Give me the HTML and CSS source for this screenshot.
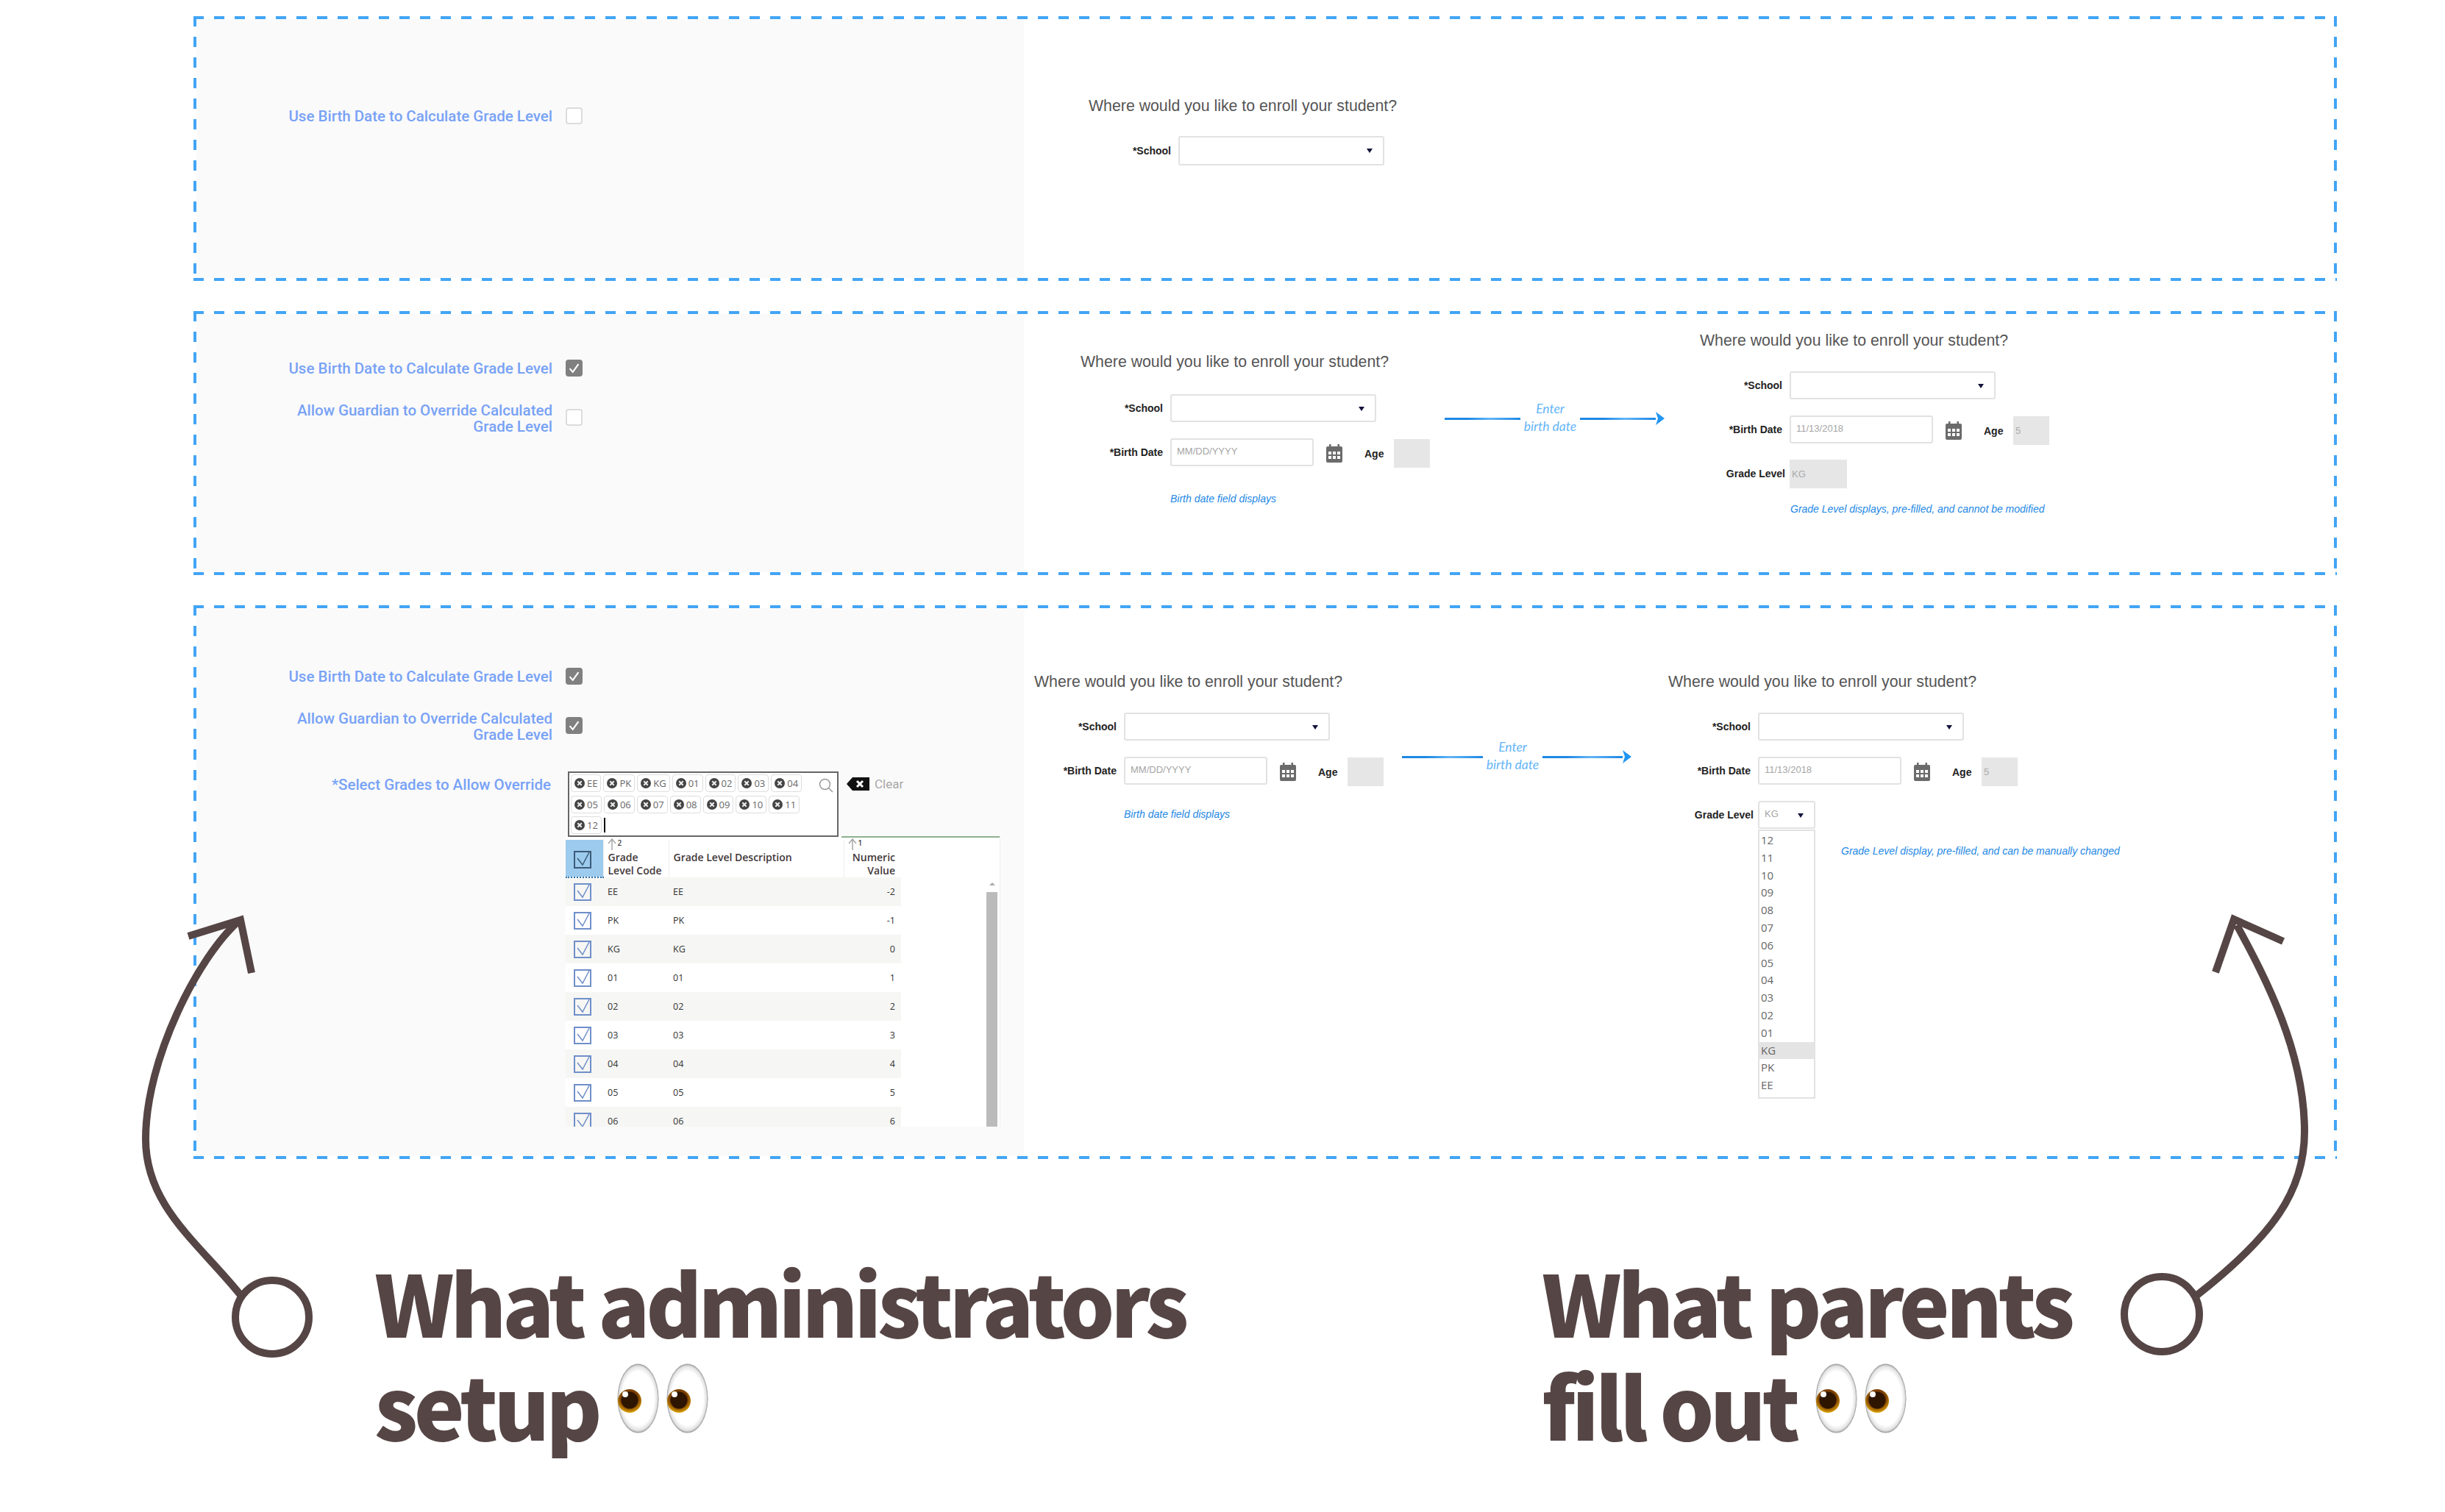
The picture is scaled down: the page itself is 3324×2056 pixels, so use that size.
FILE: index.html
```html
<!DOCTYPE html>
<html lang="en">
<head>
  <meta charset="UTF-8">
  <title>Grade Level Setup</title>
  <link rel="stylesheet" href="styles.css">
</head>
<body>

<svg class="sprite" aria-hidden="true">
  <defs>
    <radialGradient id="eyeWhite" cx="50%" cy="50%" r="50%">
      <stop offset="78%" stop-color="#ffffff"/>
      <stop offset="93%" stop-color="#e2e2e2"/>
      <stop offset="100%" stop-color="#979797"/>
    </radialGradient>
    <radialGradient id="eyeIris" cx="50%" cy="40%" r="60%">
      <stop offset="62%" stop-color="#7a3e00"/>
      <stop offset="100%" stop-color="#e0a400"/>
    </radialGradient>
  </defs>
  <symbol id="calendar" viewBox="0 0 22 25">
    <path fill="#6b6b6b" d="M4 0h2.5v3H15.500V0H18v3h2a2 2 0 0 1 2 2v18a2 2 0 0 1-2 2H2a2 2 0 0 1-2-2V5a2 2 0 0 1 2-2h2z"/>
    <path fill="#fff" d="M3 10h4v4H3zM9 10h4v4H9zM15 10h4v4h-4zM3 16h4v4H3zM9 16h4v4H9zM15 16h4v4h-4z"/>
  </symbol>
  <symbol id="chipX" viewBox="0 0 14 14">
    <circle cx="7" cy="7" r="7" fill="#444"/>
    <path d="M4.300 4.300l5.400 5.400M9.700 4.300l-5.400 5.400" stroke="#eee" stroke-width="2"/>
  </symbol>
  <symbol id="tick" viewBox="0 0 24 24">
    <rect x="1" y="1" width="22" height="22" fill="none" stroke="currentColor" stroke-width="2"/>
    <path d="M5 10l7 9 9-17" fill="none" stroke="currentColor" stroke-width="1.500"/>
  </symbol>
  <symbol id="sortUp" viewBox="0 0 12 16">
    <path d="M6 16V1M1 7l5-6 5 6" fill="none" stroke="#a8a8a8" stroke-width="1.500"/>
  </symbol>
  <symbol id="eyes" viewBox="0 0 124 95">
    <ellipse cx="28.500" cy="47.500" rx="28" ry="47" fill="url(#eyeWhite)"/>
    <circle cx="17" cy="51" r="16" fill="url(#eyeIris)"/>
    <circle cx="17" cy="50" r="11.500" fill="#2e1500"/>
    <circle cx="11" cy="42" r="4" fill="#fff"/>
    <ellipse cx="95.500" cy="47.500" rx="28" ry="47" fill="url(#eyeWhite)"/>
    <circle cx="84" cy="51" r="16" fill="url(#eyeIris)"/>
    <circle cx="84" cy="50" r="11.500" fill="#2e1500"/>
    <circle cx="78" cy="42" r="4" fill="#fff"/>
  </symbol>
</svg>

<main class="boards">

  <!-- first board: nothing checked -->
  <section class="board board-1">
    <div class="admin admin-1">
      <div class="setting">
        <label class="setting-label">Use Birth Date to Calculate Grade Level</label>
        <span class="check"></span>
      </div>
    </div>
    <div class="parent">
      <div class="form form-solo">
        <h3>Where would you like to enroll your student?</h3>
        <div class="row">
          <span class="field-label">*School</span>
          <span class="select"></span>
        </div>
      </div>
    </div>
  </section>

  <!-- second board: birth date on -->
  <section class="board board-2">
    <div class="admin admin-2">
      <div class="setting">
        <label class="setting-label">Use Birth Date to Calculate Grade Level</label>
        <span class="check check-on"><svg viewBox="0 0 16 16"><path d="M3 8.500l3.500 4L13 3.500" fill="none" stroke="#fff" stroke-width="1.800"/></svg></span>
      </div>
      <div class="setting">
        <label class="setting-label">Allow Guardian to Override Calculated<br>Grade Level</label>
        <span class="check check-up"></span>
      </div>
    </div>
    <div class="parent">
      <div class="form form-2a">
        <h3>Where would you like to enroll your student?</h3>
        <div class="row">
          <span class="field-label">*School</span>
          <span class="select"></span>
        </div>
        <div class="row">
          <span class="field-label">*Birth Date</span>
          <span class="date placeholder">MM/DD/YYYY</span>
          <svg class="cal"><use href="#calendar"/></svg>
          <span class="age-label">Age</span>
          <span class="age"></span>
        </div>
        <p class="note note-2a">Birth date field displays</p>
      </div>
      <div class="link link-2">
        <span class="line line-a"></span>
        <span class="link-text">Enter<br>birth date</span>
        <span class="line line-b"></span>
        <svg class="head" viewBox="0 0 14 18"><path d="M2 0l12 9-12 9 3-9z" fill="#2196f3"/></svg>
      </div>
      <div class="form form-2b">
        <h3>Where would you like to enroll your student?</h3>
        <div class="row">
          <span class="field-label">*School</span>
          <span class="select"></span>
        </div>
        <div class="row">
          <span class="field-label">*Birth Date</span>
          <span class="date placeholder">11/13/2018</span>
          <svg class="cal"><use href="#calendar"/></svg>
          <span class="age-label">Age</span>
          <span class="age">5</span>
        </div>
        <div class="row">
          <span class="field-label label-grade">Grade Level</span>
          <span class="age age-wide">KG</span>
        </div>
        <p class="note note-2b">Grade Level displays, pre-filled, and cannot be modified</p>
      </div>
    </div>
  </section>

  <!-- third board: override allowed -->
  <section class="board board-3">
    <div class="admin admin-3">
      <div class="setting">
        <label class="setting-label">Use Birth Date to Calculate Grade Level</label>
        <span class="check check-on"><svg viewBox="0 0 16 16"><path d="M3 8.500l3.500 4L13 3.500" fill="none" stroke="#fff" stroke-width="1.800"/></svg></span>
      </div>
      <div class="setting">
        <label class="setting-label">Allow Guardian to Override Calculated<br>Grade Level</label>
        <span class="check check-on check-up"><svg viewBox="0 0 16 16"><path d="M3 8.500l3.500 4L13 3.500" fill="none" stroke="#fff" stroke-width="1.800"/></svg></span>
      </div>
      <div class="setting setting-grades">
        <label class="setting-label">*Select Grades to Allow Override</label>
        <div class="picker">
          <span class="chip"><svg><use href="#chipX"/></svg>EE</span>
          <span class="chip"><svg><use href="#chipX"/></svg>PK</span>
          <span class="chip"><svg><use href="#chipX"/></svg>KG</span>
          <span class="chip"><svg><use href="#chipX"/></svg>01</span>
          <span class="chip"><svg><use href="#chipX"/></svg>02</span>
          <span class="chip"><svg><use href="#chipX"/></svg>03</span>
          <span class="chip"><svg><use href="#chipX"/></svg>04</span>
          <span class="chip"><svg><use href="#chipX"/></svg>05</span>
          <span class="chip"><svg><use href="#chipX"/></svg>06</span>
          <span class="chip"><svg><use href="#chipX"/></svg>07</span>
          <span class="chip"><svg><use href="#chipX"/></svg>08</span>
          <span class="chip"><svg><use href="#chipX"/></svg>09</span>
          <span class="chip"><svg><use href="#chipX"/></svg>10</span>
          <span class="chip"><svg><use href="#chipX"/></svg>11</span>
          <span class="chip"><svg><use href="#chipX"/></svg>12</span>
          <span class="caret"></span>
          <svg class="search" viewBox="0 0 20 20"><circle cx="8.500" cy="8.500" r="7" fill="none" stroke="#999" stroke-width="1.500"/><path d="M13.500 13.500L19 19" stroke="#999" stroke-width="1.500"/></svg>
        </div>
        <div class="clear">
          <svg viewBox="0 0 31 18"><path d="M0 9l8-9h23v18H8z" fill="#111"/><path d="M14 5l8 8M22 5l-8 8" stroke="#fff" stroke-width="3"/></svg>
          <span>Clear</span>
        </div>
      </div>
      <div class="grid-wrap">
        <div class="grid-rule"></div>
        <div class="grid-body">
          <table class="grid">
            <colgroup><col class="c1"><col class="c2"><col class="c3"><col class="c4"></colgroup>
            <thead>
              <tr>
                <th class="th-check"><svg class="box box-head"><use href="#tick"/></svg></th>
                <th><span class="sort"><svg><use href="#sortUp"/></svg>2</span>Grade<br>Level Code</th>
                <th>Grade Level Description</th>
                <th class="num"><span class="sort"><svg><use href="#sortUp"/></svg>1</span>Numeric<br>Value</th>
              </tr>
            </thead>
            <tbody>
              <tr><td class="td-check"><svg class="box"><use href="#tick"/></svg></td><td>EE</td><td>EE</td><td class="num">-2</td></tr>
              <tr><td class="td-check"><svg class="box"><use href="#tick"/></svg></td><td>PK</td><td>PK</td><td class="num">-1</td></tr>
              <tr><td class="td-check"><svg class="box"><use href="#tick"/></svg></td><td>KG</td><td>KG</td><td class="num">0</td></tr>
              <tr><td class="td-check"><svg class="box"><use href="#tick"/></svg></td><td>01</td><td>01</td><td class="num">1</td></tr>
              <tr><td class="td-check"><svg class="box"><use href="#tick"/></svg></td><td>02</td><td>02</td><td class="num">2</td></tr>
              <tr><td class="td-check"><svg class="box"><use href="#tick"/></svg></td><td>03</td><td>03</td><td class="num">3</td></tr>
              <tr><td class="td-check"><svg class="box"><use href="#tick"/></svg></td><td>04</td><td>04</td><td class="num">4</td></tr>
              <tr><td class="td-check"><svg class="box"><use href="#tick"/></svg></td><td>05</td><td>05</td><td class="num">5</td></tr>
              <tr><td class="td-check"><svg class="box"><use href="#tick"/></svg></td><td>06</td><td>06</td><td class="num">6</td></tr>
            </tbody>
          </table>
          <div class="scroll">
            <span class="scroll-up"></span>
            <span class="scroll-thumb"></span>
          </div>
        </div>
      </div>
    </div>
    <div class="parent">
      <div class="form form-3a">
        <h3>Where would you like to enroll your student?</h3>
        <div class="row">
          <span class="field-label">*School</span>
          <span class="select"></span>
        </div>
        <div class="row">
          <span class="field-label">*Birth Date</span>
          <span class="date placeholder">MM/DD/YYYY</span>
          <svg class="cal"><use href="#calendar"/></svg>
          <span class="age-label">Age</span>
          <span class="age"></span>
        </div>
        <p class="note note-3a">Birth date field displays</p>
      </div>
      <div class="link link-3">
        <span class="line line-a"></span>
        <span class="link-text">Enter<br>birth date</span>
        <span class="line line-b"></span>
        <svg class="head" viewBox="0 0 14 18"><path d="M2 0l12 9-12 9 3-9z" fill="#2196f3"/></svg>
      </div>
      <div class="form form-3b">
        <h3>Where would you like to enroll your student?</h3>
        <div class="row">
          <span class="field-label">*School</span>
          <span class="select"></span>
        </div>
        <div class="row">
          <span class="field-label">*Birth Date</span>
          <span class="date placeholder">11/13/2018</span>
          <svg class="cal"><use href="#calendar"/></svg>
          <span class="age-label">Age</span>
          <span class="age">5</span>
        </div>
        <div class="row">
          <span class="field-label label-grade">Grade Level</span>
          <div class="dropdown">
            <span class="select select-small placeholder">KG</span>
            <ul class="list">
              <li>12</li><li>11</li><li>10</li><li>09</li><li>08</li><li>07</li><li>06</li><li>05</li>
              <li>04</li><li>03</li><li>02</li><li>01</li><li class="picked">KG</li><li>PK</li><li>EE</li>
            </ul>
          </div>
        </div>
        <p class="note note-3b">Grade Level display, pre-filled, and can be manually changed</p>
      </div>
    </div>
  </section>
</main>

<footer class="captions">
  <h2 class="caption caption-admin">What administrators<br>setup<svg class="eyes"><use href="#eyes"/></svg></h2>
  <h2 class="caption caption-parent">What parents<br>fill out<svg class="eyes"><use href="#eyes"/></svg></h2>
</footer>

<svg class="arrows" width="3324" height="2056" aria-hidden="true">
  <g fill="none" stroke="#564545" stroke-width="10">
    <circle cx="370" cy="1791" r="50"/>
    <path d="M327 1761C270 1690 198 1640 198 1549C198 1440 270 1300 325 1252"/>
    <path d="M256 1273L327 1251L342 1323"/>
    <circle cx="2939" cy="1787" r="51"/>
    <path d="M2987 1761C3090 1680 3133 1620 3133 1539C3133 1430 3080 1330 3041 1258"/>
    <path d="M3012 1322L3037 1250L3104 1280"/>
  </g>
</svg>

</body>
</html>
```

FILE: styles.css
```css
* {
  box-sizing: border-box;
}

body {
  position: relative;
  width: 3324px;
  height: 2056px;
  margin: 0;
  overflow: hidden;
  background-color: #fff;
  font-family: 'Liberation Sans', Arial, sans-serif;
}

.sprite {
  position: absolute;
  width: 0;
  height: 0;
}

.arrows {
  position: absolute;
  top: 0;
  left: 0;
  pointer-events: none;
}

.boards {
  display: flex;
  flex-direction: column;
  gap: 41px;
  width: 2914px;
  margin-left: 263px;
  padding-top: 22px;
}

.board {
  display: flex;
  padding: 4px;
  background:
    linear-gradient(90deg, #42a5f5 50%, transparent 50%) 0 0 / 28px 4px repeat-x,
    linear-gradient(90deg, #42a5f5 50%, transparent 50%) 0 100% / 28px 4px repeat-x,
    linear-gradient(#42a5f5 50%, transparent 50%) 0 0 / 4px 28px repeat-y,
    linear-gradient(#42a5f5 50%, transparent 50%) 100% 0 / 4px 28px repeat-y;
}

.board-1 {
  height: 360px;
}

.board-2 {
  height: 359px;
}

.board-3 {
  height: 753px;
}

/* left side */
.admin {
  flex: none;
  width: 1125px;
  background-color: #fafafa;
}

.admin-1 {
  padding-top: 120px;
}

.admin-2 {
  padding-top: 62px;
}

.admin-3 {
  padding-top: 81px;
}

.setting {
  display: flex;
  align-items: center;
  margin-bottom: 35px;
}

.setting-label {
  flex: none;
  width: 484px;
  margin-right: 18px;
  color: #78a2f6;
  font-family: Roboto, sans-serif;
  font-size: 20.500px;
  font-weight: 500;
  line-height: 22px;
  text-align: right;
}

.check {
  display: block;
  width: 23px;
  height: 23px;
  border: 2px solid #dcdcdc;
  border-radius: 4px;
  background-color: #fff;
}

.check svg {
  display: block;
}

.check-on {
  border-color: #808080;
  background-color: #808080;
}

.check-up {
  margin-top: -3px;
}

.setting-grades {
  align-items: flex-start;
  margin-top: 39px;
  margin-bottom: 0;
}

.setting-grades .setting-label {
  width: 482px;
  margin-top: 7px;
  margin-right: 23px;
}

.picker {
  position: relative;
  display: flex;
  flex: none;
  flex-wrap: wrap;
  align-content: flex-start;
  gap: 4.500px 3px;
  width: 368px;
  height: 89px;
  padding: 2px 30px 2px 2px;
  border: 2px solid #666;
  background-color: #fff;
}

.chip {
  display: flex;
  align-items: center;
  gap: 3px;
  height: 24px;
  padding: 0 4px;
  border: 1px solid #ddd;
  border-radius: 4px;
  color: #666;
  font-family: 'Open Sans', sans-serif;
  font-size: 13px;
}

.chip svg {
  width: 14px;
  height: 14px;
}

.caret {
  width: 2px;
  height: 20px;
  margin-top: 2px;
  background-color: #111;
}

.search {
  position: absolute;
  top: 7px;
  right: 5px;
  width: 20px;
  height: 20px;
}

.clear {
  display: flex;
  align-items: center;
  gap: 7px;
  margin-top: 7px;
  margin-left: 11px;
  color: #a8a8a8;
  font-family: Roboto, sans-serif;
  font-size: 17px;
}

.clear svg {
  width: 31px;
  height: 18px;
}

.grid-wrap {
  width: 591px;
  height: 395px;
  margin-top: -1px;
  margin-left: 502px;
  overflow: hidden;
  border-right: 1px solid #eee;
  background-color: #fff;
}

.grid-rule {
  height: 2px;
  margin-bottom: 3px;
  margin-left: 375px;
  background-color: #8db08d;
}

.grid-body {
  display: flex;
  align-items: flex-start;
}

.grid {
  flex: none;
  width: 456px;
  border-collapse: collapse;
  table-layout: fixed;
  color: #333;
  font-family: 'Open Sans', sans-serif;
  font-size: 12.500px;
}

.c1 { width: 51px; }
.c2 { width: 89px; }
.c3 { width: 238px; }
.c4 { width: 78px; }

.grid th {
  position: relative;
  height: 51px;
  padding: 15px 6px 0;
  border-left: 1px solid #eee;
  color: #43383a;
  font-size: 14px;
  font-weight: 600;
  line-height: 18px;
  text-align: left;
  vertical-align: top;
}

.grid .th-check {
  padding: 15px 0 0 11px;
  border-left: 0;
  border-bottom: 2px dotted #2f6fa8;
  background-color: #9ccbee;
}

.grid td {
  height: 39px;
  padding: 0 6px;
  vertical-align: middle;
}

.grid .td-check {
  padding: 0 0 0 11px;
}

.grid .num {
  padding-right: 8px;
  text-align: right;
}

.grid tbody tr:nth-child(odd) {
  background-color: #f6f6f4;
}

.sort {
  position: absolute;
  top: -2px;
  left: 5px;
  display: flex;
  align-items: flex-start;
  gap: 2px;
  color: #444;
  font-size: 10px;
  line-height: 12px;
}

.sort svg {
  width: 12px;
  height: 16px;
}

.box {
  display: block;
  width: 24px;
  height: 24px;
  color: #6f8fc9;
}

.box-head {
  color: #3d5a78;
}

.scroll {
  display: flex;
  flex-direction: column;
  align-items: center;
  width: 15px;
  height: 400px;
  margin-top: 51px;
  margin-left: 116px;
}

.scroll-up {
  width: 0;
  height: 0;
  margin: 7px 0 9px;
  border-right: 4px solid transparent;
  border-bottom: 4px solid #aaa;
  border-left: 4px solid transparent;
}

.scroll-thumb {
  width: 15px;
  flex: 1;
  background-color: #bbb;
}

/* right side */
.parent {
  display: flex;
  flex: 1;
  align-items: flex-start;
}

.form {
  flex: none;
}

.form h3 {
  margin: 0 0 30px;
  color: #555;
  font-size: 21.300px;
  font-weight: 400;
  line-height: 24px;
  white-space: nowrap;
}

.form-solo {
  margin-top: 106px;
  margin-left: 88px;
}

.form-solo .select {
  height: 40px;
}

.form-2a {
  width: 495px;
  margin-top: 53px;
  margin-left: 77px;
}

.form-2a h3 {
  margin-bottom: 32px;
}

.form-2b {
  margin-top: 24px;
  margin-left: 48px;
}

.form-3a {
  width: 500px;
  margin-top: 88px;
  margin-left: 14px;
}

.form-3b {
  margin-top: 88px;
  margin-left: 50px;
}

.row {
  display: flex;
  align-items: center;
  height: 38px;
  margin-bottom: 22px;
}

.field-label {
  flex: none;
  width: 112px;
  margin-right: 10px;
  color: #222;
  font-size: 14px;
  font-weight: 700;
  text-align: right;
  white-space: nowrap;
}

.label-grade {
  margin-right: 6px;
  margin-left: 4px;
}

.select,
.date {
  display: flex;
  align-items: center;
  height: 38px;
  border: 2px solid #e2e2e2;
  border-radius: 3px;
  background-color: #fff;
}

.select {
  position: relative;
  width: 280px;
}

.select::after {
  content: "";
  position: absolute;
  top: 15px;
  right: 14px;
  border-top: 6px solid #14143c;
  border-right: 4px solid transparent;
  border-left: 4px solid transparent;
}

.select-small {
  width: 78px;
  height: 38px;
}

.date {
  width: 195px;
}

.placeholder {
  padding-left: 7px;
  padding-bottom: 3px;
  color: #a5a5a5;
  font-size: 13px;
}

.cal {
  flex: none;
  width: 22px;
  height: 25px;
  margin: 3px 0 0 17px;
}

.age-label {
  width: 26px;
  margin: 3px 14px 0 30px;
  color: #222;
  font-size: 14px;
  font-weight: 700;
}

.age {
  display: flex;
  align-items: center;
  width: 49px;
  height: 39px;
  margin-top: 3px;
  padding-left: 3px;
  background-color: #e6e6e6;
  color: #aaa;
  font-size: 13px;
}

.age-wide {
  width: 78px;
  margin-top: 0;
}

.note {
  margin: 0;
  color: #1e88e5;
  font-size: 14px;
  font-style: italic;
  line-height: 16px;
  white-space: nowrap;
}

.note-2a,
.note-3a {
  margin-left: 122px;
}

.note-2a {
  margin-top: 36px;
}

.note-3a {
  margin-top: 32px;
}

.note-2b {
  margin-top: -1px;
  margin-left: 123px;
}

.note-3b {
  margin-left: 235px;
  margin-top: 4px;
}

.dropdown {
  position: relative;
}

.list {
  position: absolute;
  top: 39px;
  left: 0;
  width: 78px;
  height: 366px;
  margin: 0;
  padding: 1px 0 0;
  list-style: none;
  border: 2px solid #e2e2e2;
  background-color: #fff;
  color: #666;
  font-family: 'Open Sans', sans-serif;
  font-size: 15px;
  line-height: 23.800px;
}

.list li {
  height: 23.800px;
  padding-left: 2px;
}

.list .picked {
  background-color: #e4e4e4;
}

/* connector between two forms */
.link {
  display: flex;
  flex: none;
  align-items: center;
  height: 48px;
}

.link-2 {
  margin-top: 118px;
  --a: 103px;
  --b: 103px;
}

.link-3 {
  margin-top: 178px;
  --a: 110px;
  --b: 109px;
}

.line {
  display: block;
  height: 3px;
  background: linear-gradient(90deg, #1e88e5 30%, #64b5f6 60%, #1e88e5);
}

.line-a {
  width: var(--a);
}

.line-b {
  width: var(--b);
}

.link-text {
  width: 81px;
  padding-bottom: 3px;
  color: #64b5f6;
  font-family: Lato, sans-serif;
  font-size: 17.500px;
  font-style: italic;
  line-height: 24px;
  text-align: center;
}

.head {
  width: 14px;
  height: 18px;
  margin-left: -2px;
}

/* big captions under the boards */
.captions {
  display: flex;
  margin-top: 122px;
  padding-left: 509px;
}

.caption {
  margin: 0;
  color: #564545;
  font-family: 'Noto Sans CJK JP', 'Noto Sans', sans-serif;
  font-size: 116px;
  font-weight: 900;
  letter-spacing: -5.300px;
  line-height: 140px;
  white-space: nowrap;
}

.caption-admin {
  width: 1587px;
}

.eyes {
  width: 124px;
  height: 95px;
  margin-left: 26px;
  vertical-align: 10px;
}
```
